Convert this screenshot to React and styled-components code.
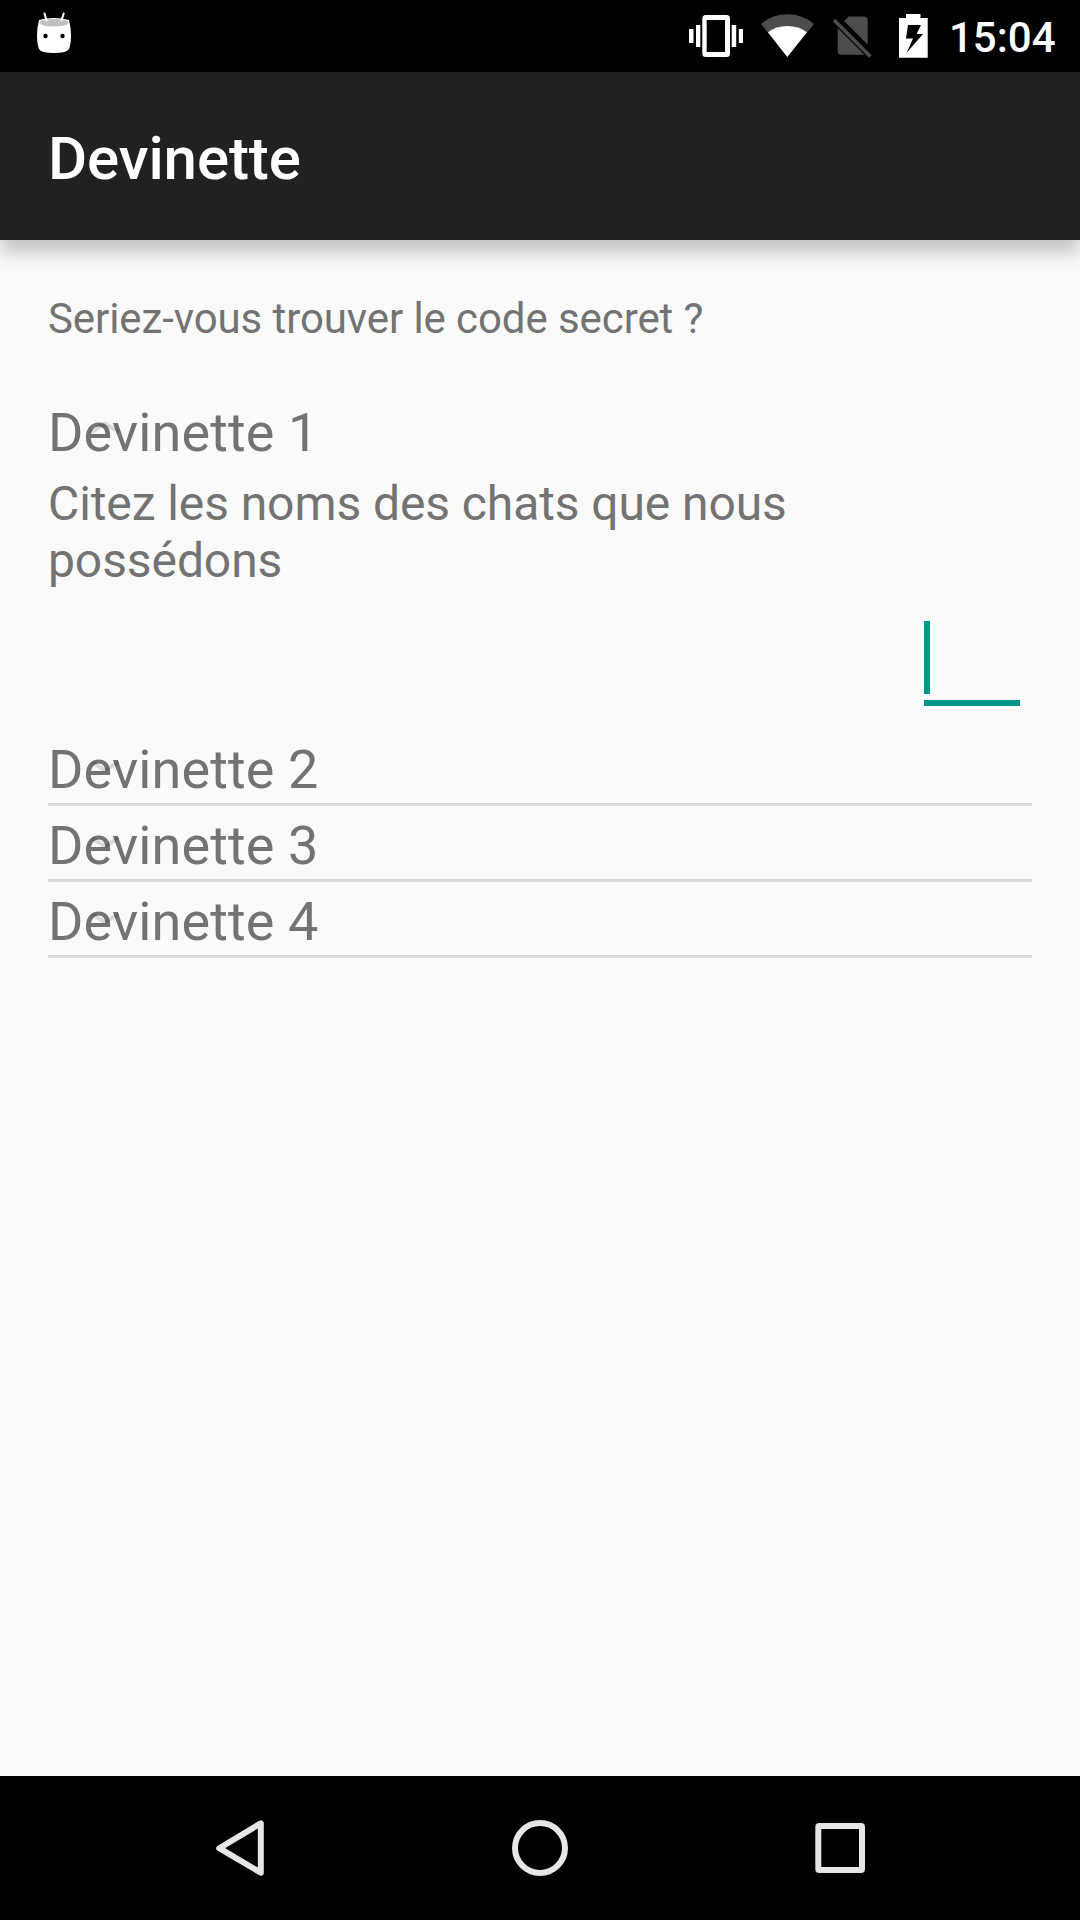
import React from 'react';
import styled, { createGlobalStyle } from 'styled-components';

const GlobalStyle = createGlobalStyle`
  *, *::before, *::after { box-sizing: border-box; }
  body { margin: 0; background: #fafafa; font-family: Roboto, sans-serif; }
`;

const Screen = styled.div`
  width: 1080px;
  height: 1920px;
  display: flex;
  flex-direction: column;
  background: #fafafa;
  color: #737373;
  overflow: hidden;
`;

const StatusBar = styled.header`
  height: 72px;
  flex: none;
  display: flex;
  align-items: flex-start;
  justify-content: space-between;
  padding: 0 24px 0 30px;
  background: #000;
  color: #fff;
`;

const StatusIcons = styled.div`
  display: flex;
  align-items: flex-start;
  height: 72px;
`;

const StatusIcon = styled.svg`
  display: block;
  flex: none;
  height: 72px;
  width: ${(p) => p.$width}px;
`;

const Clock = styled.time`
  font-size: 42px;
  font-weight: 500;
  line-height: 50px;
  padding-top: 13px;
  width: 107px;
  white-space: nowrap;
`;

const AppBar = styled.div`
  height: 168px;
  flex: none;
  display: flex;
  align-items: center;
  padding: 5px 48px 0;
  background: #212121;
  box-shadow: 0 12px 18px rgba(0, 0, 0, 0.23);
`;

const Title = styled.h1`
  margin: 0;
  color: #fff;
  font-size: 60px;
  font-weight: 500;
  line-height: 70px;
  letter-spacing: -0.1px;
`;

const Content = styled.main`
  flex: 1;
  padding: 54px 48px 0;
`;

const Intro = styled.p`
  margin: 0;
  height: 99px;
  font-size: 42px;
  line-height: 50px;
  letter-spacing: -0.09px;
`;

const GroupHeader = styled.div`
  position: relative;
  height: ${(p) => (p.$divided ? 76 : 82)}px;
  padding-top: 8px;
  font-size: 54px;
  line-height: 64px;
  letter-spacing: 0.11px;
  border-bottom: ${(p) => (p.$divided ? '3px solid #dbdbdb' : '0')};
`;

const Indicator = styled.svg`
  position: absolute;
  left: 39px;
  top: 23px;
  width: 36px;
  height: 24px;
`;

const Question = styled.p`
  margin: 0;
  font-size: 48px;
  line-height: 57px;
  letter-spacing: -0.09px;
`;

const AnswerRow = styled.div`
  display: flex;
  justify-content: flex-end;
  height: 141px;
  padding: 32px 12px 24px;
`;

const AnswerField = styled.div`
  width: 96px;
  border-bottom: 6px solid #009688;
`;

const Caret = styled.div`
  width: 6px;
  height: 73px;
  background: #009688;
`;

const NavBar = styled.nav`
  height: 144px;
  flex: none;
  display: flex;
  justify-content: center;
  gap: 156px;
  background: #000;
`;

const NavIcon = styled.svg`
  display: block;
  width: 144px;
  height: 144px;
  fill: none;
  stroke: #e6e6e6;
  stroke-width: 6;
  stroke-linejoin: round;
`;

function Riddle({ title, expanded, children }) {
  return (
    <section>
      <GroupHeader $divided={!expanded}>
        {title}
        <Indicator viewBox="0 0 36 24" fill="none" stroke="#000" strokeOpacity="0.13" strokeWidth="4">
          <path d={expanded ? 'M4.500 16L18 7.500L31.500 16' : 'M4.500 9L18 17.500L31.500 9'} />
        </Indicator>
      </GroupHeader>
      {children}
    </section>
  );
}

export default function App() {
  return (
    <>
      <GlobalStyle />
      <Screen>
        <StatusBar>
          <StatusIcon $width={48} viewBox="0 0 48 72">
            <path d="M9 20Q24 16 39 20Q41 27 41 36Q41 44 39 49Q37 53 24 53Q11 53 9 49Q7 44 7 36Q7 27 9 20Z" fill="#fff" />
            <ellipse cx="24" cy="22.7" rx="14.5" ry="3.8" fill="#c0c0c0" />
            <path d="M14.5 13.5L16.5 20.5M33.7 13.5L31.5 20.5" stroke="#fff" strokeWidth="2" strokeLinecap="round" />
            <circle cx="15.5" cy="36" r="2.2" fill="#000" />
            <circle cx="32.5" cy="36" r="2.2" fill="#000" />
          </StatusIcon>
          <StatusIcons>
            <StatusIcon $width={261} viewBox="0 0 261 72">
              <g fill="#fff">
                <path fillRule="evenodd" d="M17.800 15H38.500Q42 15 42 18.500V53.500Q42 57 38.500 57H17.800Q14.300 57 14.300 53.500V18.500Q14.300 15 17.800 15ZM18.700 20V52H37V20Z" />
                <path d="M1 29h4.500v14h-4.500zM8 25h4.300v22h-4.300zM43.700 25h4.500v22h-4.500zM50.800 29h4.200v14h-4.200z" />
              </g>
              <path d="M99.300 57L73 24Q84 14.300 99.300 14.300Q114.500 14.300 126 24Z" fill="#4d4d4d" />
              <path d="M99.300 57L80 32.300Q88.500 26 99.300 26Q110.500 26 118.900 32.300Z" fill="#fff" />
              <path d="M156 21L160.500 16.500H176Q179.700 16.500 179.700 20V44.500ZM149.700 28L176.500 54.700H153Q149.700 54.700 149.700 51Z" fill="#4d4d4d" />
              <path d="M146 20L182.300 56.500" stroke="#4d4d4d" strokeWidth="3.600" />
              <path transform="translate(-19 0)" fillRule="evenodd" d="M237 14H251.500V18H258.700V57.800H230V18H237ZM239 25L237 38.500H244L237.500 53L254 34H247.500L252 25Z" fill="#fff" />
            </StatusIcon>
            <Clock>15:04</Clock>
          </StatusIcons>
        </StatusBar>
        <AppBar>
          <Title>Devinette</Title>
        </AppBar>
        <Content>
          <Intro>Seriez-vous trouver le code secret ?</Intro>
          <Riddle title="Devinette 1" expanded>
            <Question>Citez les noms des chats que nous possédons</Question>
            <AnswerRow>
              <AnswerField>
                <Caret />
              </AnswerField>
            </AnswerRow>
          </Riddle>
          <Riddle title="Devinette 2" />
          <Riddle title="Devinette 3" />
          <Riddle title="Devinette 4" />
        </Content>
        <NavBar>
          <NavIcon viewBox="0 0 144 144">
            <path d="M51.200 72.200L92.800 47.300V96.700Z" />
          </NavIcon>
          <NavIcon viewBox="0 0 144 144">
            <circle cx="72" cy="72" r="25" />
          </NavIcon>
          <NavIcon viewBox="0 0 144 144">
            <rect x="50.300" y="50" width="43.700" height="44" rx="1" />
          </NavIcon>
        </NavBar>
      </Screen>
    </>
  );
}
